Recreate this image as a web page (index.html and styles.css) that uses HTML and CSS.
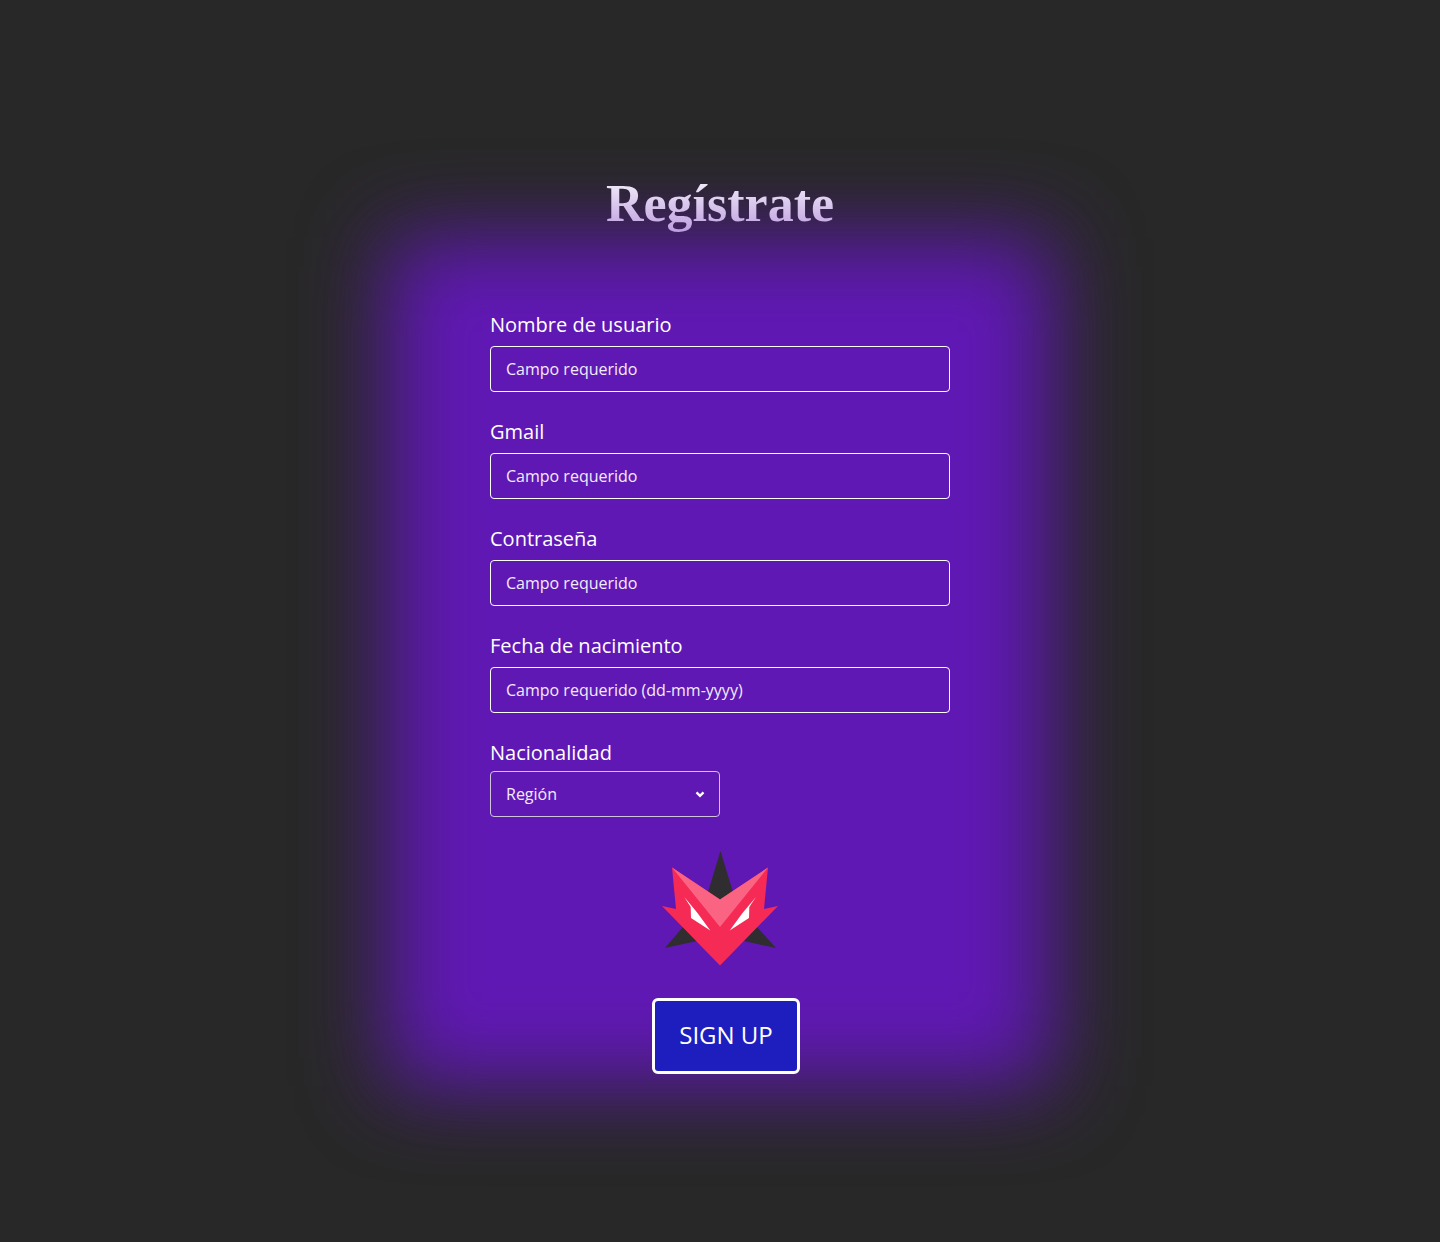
FILE: index.html
```html
<!DOCTYPE html>
<html lang="es">
<head>
  <meta charset="utf-8">
  <meta name="viewport" content="width=device-width, initial-scale=1">
  <title>Regístrate</title>
  <link rel="stylesheet" href="styles.css">
</head>
<body>
  <main class="page">
    <form class="signup">
      <h1 class="title">Regístrate</h1>

      <div class="fields">
        <div class="field">
          <label for="username">Nombre de usuario</label>
          <input class="control" id="username" type="text" placeholder="Campo requerido">
        </div>
        <div class="field">
          <label for="email">Gmail</label>
          <input class="control" id="email" type="email" placeholder="Campo requerido">
        </div>
        <div class="field">
          <label for="password">Contraseña</label>
          <input class="control" id="password" type="password" placeholder="Campo requerido">
        </div>
        <div class="field">
          <label for="birthdate">Fecha de nacimiento</label>
          <input class="control" id="birthdate" type="text" placeholder="Campo requerido (dd-mm-yyyy)">
        </div>
        <div class="field field-region">
          <label for="region">Nacionalidad</label>
          <div class="select-wrap">
            <select class="control" id="region">
              <option>Región</option>
            </select>
            <svg class="chevron" viewBox="0 0 8 6" aria-hidden="true"><path d="M1 1.2 4 4.2 7 1.2"/></svg>
          </div>
        </div>
      </div>

      <svg class="logo" viewBox="0 0 116 115" aria-hidden="true">
        <path fill="#2f2d2f" d="M58.5 0 71 41 58 50 46 41ZM3 97 21 76 35 90ZM114 97 95 76 82 90Z"/>
        <path fill="#f52a55" d="M10 16.500 58 48.500 106 16.500 102 58 116 55 58 114.500 0 55 14 58Z"/>
        <path fill="#fa6482" d="M10 16.500 58 48.500 106 16.500 58 76Z"/>
        <path fill="#fff" d="M22.300 46 35.500 62 48.300 79.500 29 67 28.700 56ZM94 46 80.500 62 67.700 79.500 87 67 87.300 56Z"/>
      </svg>

      <div class="actions">
        <button class="submit" type="submit">SIGN UP</button>
      </div>
    </form>
  </main>
</body>
</html>
```
FILE: styles.css
```css
* {
  box-sizing: border-box;
}

body {
  margin: 0;
  background: #282828;
  color: #fff;
  font-family: "Open Sans", "Noto Sans", sans-serif;
}

.page {
  min-height: 100vh;
  padding: 168px 24px;
  overflow: hidden;
}

.signup {
  position: relative;
  z-index: 0;
  display: flex;
  flex-direction: column;
  align-items: center;
  max-width: 460px;
  margin: 0 auto;
}

/* Soft purple glow behind the form */
.signup::before {
  content: "";
  position: absolute;
  z-index: -1;
  inset: 70px -102px -12px;
  background: #6018b4;
  filter: blur(42px);
}

.title {
  margin: 0;
  font: bold 52px/72px "Liberation Serif", serif;
  background: linear-gradient(#fff, #b592dc);
  background-clip: text;
  -webkit-background-clip: text;
  color: transparent;
}

.fields {
  display: flex;
  flex-direction: column;
  gap: 26px;
  width: 100%;
  margin-top: 71px;
}

.field {
  display: flex;
  flex-direction: column;
  gap: 7px;
}

.field-region {
  gap: 4px;
}

.field label {
  font-size: 20px;
  line-height: 28px;
}

.control {
  width: 100%;
  height: 46px;
  padding: 0 15px;
  border: 1px solid #fff;
  border-radius: 4px;
  background: transparent;
  color: #f3ebfa;
  font: 16px/24px "Open Sans", "Noto Sans", sans-serif;
}

.control::placeholder {
  color: #f3ebfa;
  opacity: 1;
}

.select-wrap {
  position: relative;
  width: 50%;
}

.select-wrap .control {
  display: block;
  border-color: #d0c4dc;
  appearance: none;
}

.chevron {
  position: absolute;
  top: 20px;
  right: 15px;
  width: 10px;
  height: 7px;
  fill: none;
  stroke: #fff;
  stroke-width: 2;
  pointer-events: none;
}

.logo {
  width: 116px;
  height: 115px;
  margin-top: 34px;
}

.actions {
  margin-top: 32px;
  padding-left: 12px;
}

.submit {
  padding: 16px 24px 18px;
  border: 3px solid #fff;
  border-radius: 6px;
  background: #1e1ebe;
  color: #fff;
  font: 24px/36px "Open Sans", "Noto Sans", sans-serif;
}
```
